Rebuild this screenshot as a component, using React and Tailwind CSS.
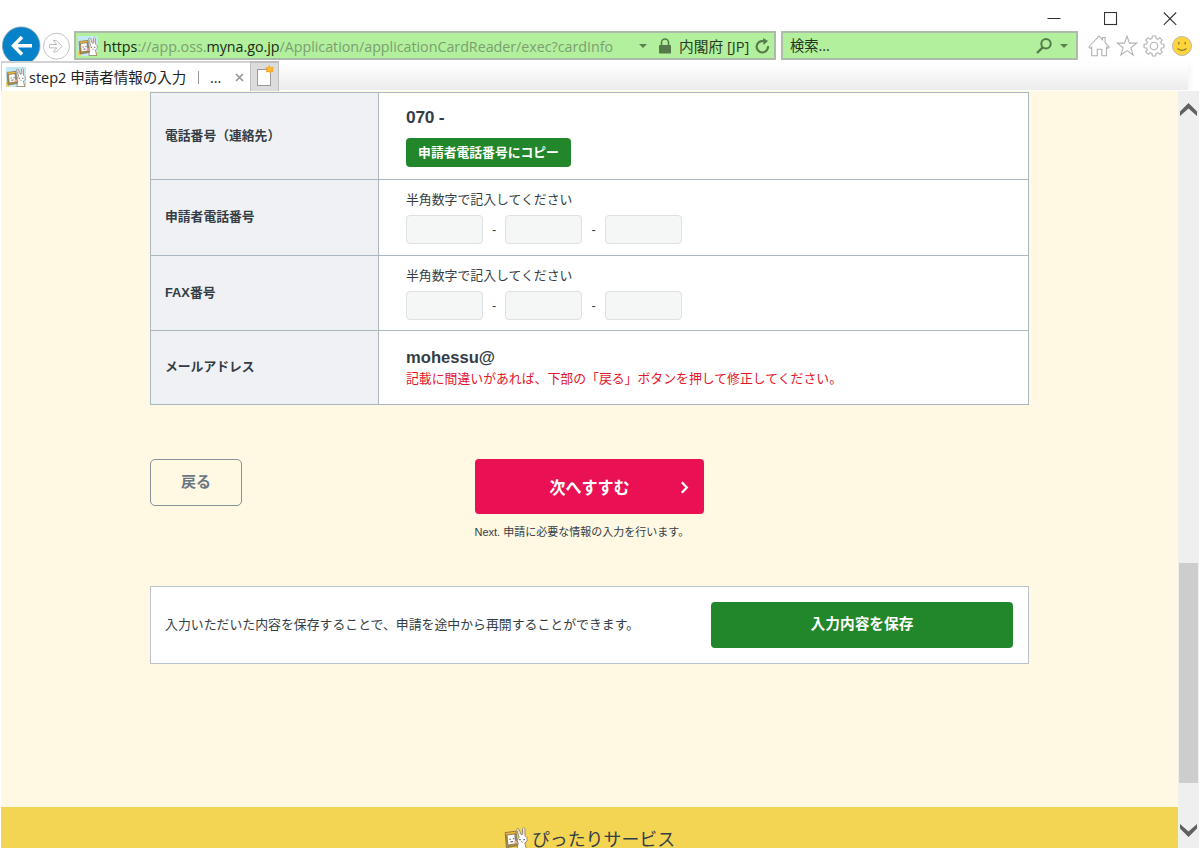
import React from "react";

function Mascot({ className, sky = true }) {
  return (
    <svg className={className} viewBox="0 0 20 20">
      {sky && <rect width="20" height="20" fill="#c3eaf4" />}
      {sky && <path d="M0 15h3v5H0zM11 16h9v4h-9z" fill="#e8d679" />}
      <g stroke="#6b6558" strokeWidth=".6" fill="#fff">
        <path d="M12.600 9.200 10.600 3q.3-2 1.900-.3l1.800 4.500 1-.1.200-5q1-1.700 1.900 0l.1 6q2.400 1.300 1.800 4-.7 1.700-2 2l1.500 5.400h-8l1-5q-2-2.600.800-5.300Z" />
        <path d="M1 5.500 10 4.300 11 16.500 2 18Z" fill="#b98d35" />
        <path d="M2.500 7.500 9 6.700 9.700 14.800 3.300 15.900Z" />
      </g>
      <path d="M1.500 5.800l8-1 .1 1.300-8 1Z" fill="#f0b93a" />
      <path d="M11.800 3.500l1.400 3.300M16.500 3v3.800" stroke="#efb8ae" strokeWidth=".7" />
      <path d="M4.500 11h1.200M7.400 10.600h1.200M5.300 13.300l2.200-.4" stroke="#524f4b" strokeWidth=".9" />
      <path d="M13.300 10.800v1M16.800 10.800v1" stroke="#333" strokeWidth="1" />
      <path d="M14.300 13.100q.9.800 1.700 0" stroke="#765" strokeWidth=".6" fill="none" />
      <circle cx="9.800" cy="13.500" r="1.200" fill="#f4a79f" />
    </svg>
  );
}

function Caret({ className }) {
  return (
    <svg className={className} viewBox="0 0 8 4">
      <path d="M0 0h8L4 4Z" fill="#5b8050" />
    </svg>
  );
}

function WindowControls() {
  return (
    <div className="flex h-[31px] shrink-0 items-start justify-end pr-[23px] pt-3">
      <svg className="mr-[43px] h-[14px] w-[14px]" viewBox="0 0 14 14">
        <path d="M.5 6.500h13" stroke="#333" />
      </svg>
      <svg className="mr-[45px] h-[14px] w-[14px]" viewBox="0 0 14 14">
        <rect x=".5" y=".5" width="12" height="12" fill="none" stroke="#333" strokeWidth="1.100" />
      </svg>
      <svg className="h-[14px] w-[14px]" viewBox="0 0 14 14">
        <path d="M.8.500l12.400 12.400M13.200.500.8 12.900" stroke="#333" strokeWidth="1.100" />
      </svg>
    </div>
  );
}

const gearPath = (() => {
  const points = [];
  for (let i = 0; i < 8; i += 1) {
    [[-15, 7.7], [-10, 10.1], [10, 10.1], [15, 7.7]].forEach(([offset, radius]) => {
      const angle = ((i * 45 + offset) * Math.PI) / 180;
      points.push(`${(11 + radius * Math.cos(angle)).toFixed(2)} ${(11 + radius * Math.sin(angle)).toFixed(2)}`);
    });
  }
  return `M${points.join("L")}Z`;
})();

function ToolIcons() {
  return (
    <div className="flex items-center gap-[5.500px] pl-[10px]">
      <svg className="h-[22px] w-[22px]" viewBox="0 0 22 22" fill="none" stroke="#b2b2b2" strokeWidth="1.100">
        <path d="M.8 12 11 1l3.500 3.800V2.500h2.600v5.100L21.300 12l-1.500 1.300-1.300-1.200v8.700h-4.700v-6.500H9.300v6.500H3.700v-8.700l-1.400 1.200Z" />
      </svg>
      <svg className="h-[22px] w-[22px]" viewBox="0 0 22 22" fill="none" stroke="#b2b2b2" strokeWidth="1.100">
        <path d="m11 1.200 2.500 6.900h7.300l-5.900 4.600 2.200 7.300-6.100-4.400L4.900 20l2.200-7.300-5.900-4.600h7.300Z" />
      </svg>
      <svg className="h-[22px] w-[22px]" viewBox="0 0 22 22" fill="none" stroke="#b2b2b2" strokeWidth="1.100">
        <path d={gearPath} strokeLinejoin="round" />
        <circle cx="11" cy="11" r="3.700" />
      </svg>
      <svg className="h-[22px] w-[22px]" viewBox="0 0 22 22">
        <circle cx="11" cy="11" r="9.500" fill="#ffd53d" stroke="#b9b7ac" />
        <path d="M7.800 7v2.500M14.200 7v2.500" stroke="#8f7a2d" strokeWidth="1.300" />
        <path d="M6.500 13.500q4.500 3.800 9 0" stroke="#8f7a2d" strokeWidth="1.200" fill="none" />
      </svg>
    </div>
  );
}

function AddressRow() {
  return (
    <div className="flex h-[30px] shrink-0 font-['Open_Sans','Noto_Sans_CJK_JP',sans-serif]">
      <div className="relative w-[74px] shrink-0">
        <svg className="absolute left-0 top-[-6px] h-[37px] w-[74px]" viewBox="0 0 74 37">
          <circle cx="21.200" cy="20.700" r="18.800" fill="#0682c8" stroke="#8ba5b5" strokeWidth=".8" />
          <path d="M22 12 13.500 20.800 22 29.500M14 20.800h18" fill="none" stroke="#fff" strokeWidth="3.500" />
          <circle cx="56.500" cy="21.200" r="13" fill="#fff" stroke="#c4c4c4" />
          <path d="M49.500 19.500h7.200l-3.400-4h3l5.700 5.700-5.700 5.700h-3l3.400-4h-7.200Z" fill="none" stroke="#bdbdbd" />
        </svg>
      </div>
      <div className="flex h-[29px] w-[702px] shrink-0 items-center border-2 border-[#acbca8] bg-[#b2f09d] pl-[2px] pt-[1px]">
        <Mascot className="h-5 w-5 shrink-0" />
        <span className="ml-[5px] w-[511px] shrink-0 whitespace-nowrap pt-px text-[14.300px] leading-[22px] tracking-[-0.03px] text-[#7c9f70]">
          <span className="text-[#1c2a17]">https</span>://app.oss.<span className="text-[#1c2a17]">myna.go.jp</span>/Application/applicationCardReader/exec?cardInfo
        </span>
        <Caret className="ml-[25px] h-1 w-2 shrink-0" />
        <svg className="ml-3 h-4 w-3 shrink-0" viewBox="0 0 12 16">
          <path d="M2.500 8V4.500a3.500 3.500 0 0 1 7 0V8" fill="none" stroke="#567b4b" strokeWidth="1.600" />
          <rect y="7" width="12" height="8.500" rx=".7" fill="#567b4b" />
        </svg>
        <span className="ml-[8px] w-[71px] shrink-0 whitespace-nowrap text-[14.7px] leading-[22px] text-[#283b21]">内閣府 [JP]</span>
        <svg className="ml-[5px] h-4 w-[15px] shrink-0" viewBox="0 0 15 16">
          <path d="M8.500 3.200A5.700 5.700 0 1 0 13 8.200" fill="none" stroke="#567b4b" strokeWidth="2.200" />
          <path d="M8 0l5 3-4.500 4Z" fill="#567b4b" />
        </svg>
      </div>
      <div className="ml-[5px] flex h-[29px] w-[297px] shrink-0 items-center border-2 border-[#acbca8] bg-[#b2f09d] pl-[7px] pr-[8px] pt-[1px]">
        <span className="grow text-[14.300px] leading-[22px] text-[#22331c]">検索...</span>
        <svg className="h-4 w-4" viewBox="0 0 16 16">
          <circle cx="10" cy="5.800" r="4.700" fill="none" stroke="#567b4b" strokeWidth="2" />
          <path d="M6.700 9.300 1 15" stroke="#567b4b" strokeWidth="2.400" />
        </svg>
        <Caret className="ml-2 h-1 w-2" />
      </div>
      <ToolIcons />
    </div>
  );
}

function TabBar() {
  return (
    <div className="flex h-[30px] shrink-0 pl-px">
      <div className="z-10 flex h-[30px] w-[249px] shrink-0 items-center border-l border-t-2 border-[#d2d2d2] bg-white pl-[4px] font-['Open_Sans','Noto_Sans_CJK_JP',sans-serif] text-[14.5px] leading-[22px] text-[#222]">
        <Mascot className="h-5 w-5 shrink-0" />
        <span className="ml-[3px] w-[159px] whitespace-nowrap pt-px">step2 申請者情報の入力</span>
        <span className="ml-[10px] h-[13px] w-px bg-[#999]" />
        <span className="ml-[11px] w-[25px] pt-px">...</span>
        <svg className="h-[9px] w-[9px]" viewBox="0 0 9 9">
          <path d="m1 1 7 7M8 1 1 8" stroke="#999" strokeWidth="1.700" />
        </svg>
      </div>
      <div className="z-10 flex w-[29px] shrink-0 justify-center border-x border-t-2 border-[#bdbdbd] bg-[#dcdcdc]">
        <svg className="mt-[2px] h-[22px] w-[19px]" viewBox="0 0 19 22">
          <rect x="2.500" y="4.500" width="13" height="16" fill="#fff" stroke="#999" />
          <path d="m14.500 0 1.200 2.300 2.800-.4-.7 2.500 1.200 1.800-2.500.8-1 1.500-1.800-1.400-2.700.2.500-2.600-1.500-2 2.700-.4Z" fill="#f5a62a" />
          <circle cx="14.700" cy="4.200" r="2.200" fill="#ffbd35" />
        </svg>
      </div>
      <div className="mr-[12px] mt-[3px] h-[26px] grow bg-linear-to-b from-white to-[#ececec] shadow-[4px_0_5px_-1px_#f6f6f6]" />
    </div>
  );
}

function Row({ label, height, children }) {
  return (
    <div className={`flex border-b border-[#a9b7c1] ${height}`}>
      <div className="flex w-[228px] shrink-0 items-center border-r border-[#a9b7c1] bg-[#f0f1f4] pb-px pl-[14px] text-[12.8px] font-bold leading-[18px]">{label}</div>
      <div className="flex grow flex-col items-start bg-white pl-[27px]">{children}</div>
    </div>
  );
}

function NumberFields({ label }) {
  const box = "h-[29px] w-[77px] rounded-[4px] border border-[#dce1e5] bg-[#f5f7f7] outline-none";
  return (
    <>
      <span className="mt-[11px] text-[12.860px] leading-[18px]">半角数字で記入してください</span>
      <div className="mt-[6px] flex items-center text-[12.8px]">
        <input aria-label={`${label} 1`} className={box} />
        <span className="w-[22.400px] text-center">-</span>
        <input aria-label={`${label} 2`} className={box} />
        <span className="w-[22.600px] text-center">-</span>
        <input aria-label={`${label} 3`} className={box} />
      </div>
    </>
  );
}

function Page() {
  return (
    <main className="flex w-[1177px] shrink-0 flex-col bg-[#fff8e2] font-['Liberation_Sans','Noto_Sans_CJK_JP',sans-serif] text-[#343d45]">
      <section className="ml-[149px] mt-px w-[879px] border-x border-t border-[#a9b7c1]">
        <Row label="電話番号（連絡先）" height="h-[87px]">
          <span className="mt-[14px] text-[17.400px] font-bold leading-[20px] tracking-[-0.250px]">070 -</span>
          <button className="mt-[11px] h-[29px] w-[165px] rounded-[4px] bg-[#22862a] text-[12.8px] font-bold leading-[18px] text-white">申請者電話番号にコピー</button>
        </Row>
        <Row label="申請者電話番号" height="h-[76px]"><NumberFields label="申請者電話番号" /></Row>
        <Row label="FAX番号" height="h-[75px]"><NumberFields label="FAX番号" /></Row>
        <Row label="メールアドレス" height="h-[74px]">
          <span className="mt-[17px] text-[16.6px] font-bold leading-[20px]">mohessu@</span>
          <span className="mt-[2px] text-[12.860px] leading-[18px] text-[#e3162b]">記載に間違いがあれば、下部の「戻る」ボタンを押して修正してください。</span>
        </Row>
      </section>
      <section className="ml-[149px] mt-[54px] flex items-start">
        <button className="h-[47px] w-[92px] rounded-[5px] border border-[#87939a] pb-[2px] text-[15px] font-bold leading-[20px] text-[#697783]">戻る</button>
        <div className="ml-[232.500px] w-[229px]">
          <button className="flex h-[55px] w-full items-center rounded-[4px] bg-[#e91153] text-white">
            <span className="ml-[75px] w-[80px] scale-y-110 whitespace-nowrap pt-[2px] text-[16px] font-bold leading-[24px]">次へすすむ</span>
            <svg className="ml-[50px] mt-px h-[13px] w-[9px]" viewBox="0 0 9 13">
              <path d="m1.800 1.300 5 5.200-5 5.200" fill="none" stroke="#fff" strokeWidth="2.300" />
            </svg>
          </button>
          <p className="mt-[9px] whitespace-nowrap text-[11px] leading-[18px]">Next. 申請に必要な情報の入力を行います。</p>
        </div>
      </section>
      <section className="ml-[149px] mt-[45px] flex h-[78px] w-[879px] items-center justify-between border border-[#b9c3cb] bg-white pl-[14px] pr-[15px]">
        <span className="pb-px text-[12.880px] leading-[18px]">入力いただいた内容を保存することで、申請を途中から再開することができます。</span>
        <button className="h-[46px] w-[302px] rounded-[4px] bg-[#22862a] pb-[2px] text-[14.7px] font-bold leading-[20px] text-white">入力内容を保存</button>
      </section>
      <footer className="mt-auto flex h-[41px] shrink-0 items-start justify-center overflow-hidden bg-[#f3d553]">
        <div className="flex items-start pt-[19px]">
          <Mascot sky={false} className="h-[24px] w-[24px]" />
          <span className="ml-[4px] pt-px text-[17.900px] leading-[26px]">ぴったりサービス</span>
        </div>
      </footer>
    </main>
  );
}

function Scrollbar() {
  return (
    <div className="flex w-[21px] shrink-0 flex-col items-center bg-[#efefef]">
      <svg className="mt-[12px] h-[14px] w-[17px]" viewBox="0 0 17 14">
        <path d="M8.500 0 17 8.500v4.500L8.500 5.500 0 13V8.500Z" fill="#606060" />
      </svg>
      <div className="mt-[446px] h-[220px] w-[19px] bg-[#cdcdcd]" />
      <svg className="mt-[41px] h-[14px] w-[17px]" viewBox="0 0 17 14">
        <path d="M8.500 13 17 4.500V0L8.500 7.500 0 0v4.500Z" fill="#606060" />
      </svg>
    </div>
  );
}

export default function App() {
  return (
    <div className="flex h-[849px] w-[1200px] flex-col overflow-hidden bg-white">
      <WindowControls />
      <AddressRow />
      <TabBar />
      <div className="flex h-[757px] shrink-0 pl-px">
        <Page />
        <Scrollbar />
      </div>
    </div>
  );
}
